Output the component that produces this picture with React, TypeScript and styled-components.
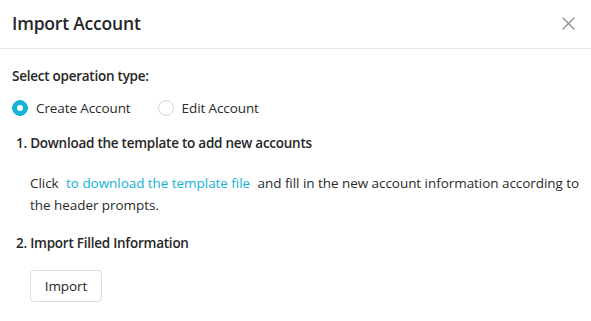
import React, { useState } from "react";
import styled, { createGlobalStyle } from "styled-components";

const Global = createGlobalStyle`
  html, body { margin: 0; padding: 0; background: #ffffff; }
  body { font-family: "Open Sans", "Noto Sans", sans-serif; color: #262626; }
  * { box-sizing: border-box; }
`;

const ACCENT = "#15b2d8";

const Dialog = styled.div`
  width: 591px;
  height: 321px;
  background: #fff;
  display: flex;
  flex-direction: column;
`;

const Header = styled.div`
  height: 49px;
  display: flex;
  align-items: center;
  justify-content: space-between;
  padding: 0 12px 2px 12px;
  border-bottom: 1px solid #e9e9e9;
`;

const Title = styled.h1`
  margin: 0;
  font-size: 17.5px;
  font-weight: 600;
  color: #262626;
  letter-spacing: -0.2px;
`;

const CloseButton = styled.button`
  border: none;
  background: transparent;
  padding: 0;
  width: 16px;
  height: 16px;
  margin-right: 3px;
  display: flex;
  align-items: center;
  justify-content: center;
  cursor: pointer;
`;

const Body = styled.div`
  padding: 17px 8px 0 12px;
  display: flex;
  flex-direction: column;
`;

const Label = styled.div`
  font-size: 13.5px;
  font-weight: 600;
  line-height: 20px;
  letter-spacing: -0.25px;
`;

const RadioGroup = styled.div`
  display: flex;
  align-items: center;
  gap: 27px;
  margin-top: 12px;
  height: 20px;
`;

const RadioOption = styled.label`
  display: flex;
  align-items: center;
  gap: 8px;
  font-size: 13.5px;
  letter-spacing: -0.1px;
  cursor: pointer;
  color: #2a2a2a;
`;

const RadioDot = styled.span<{ $checked: boolean }>`
  width: 16px;
  height: 16px;
  border-radius: 50%;
  display: inline-flex;
  align-items: center;
  justify-content: center;
  background: ${(p) => (p.$checked ? ACCENT : "#fff")};
  border: 1px solid ${(p) => (p.$checked ? ACCENT : "#d9d9d9")};
  &::after {
    content: "";
    width: 6px;
    height: 6px;
    border-radius: 50%;
    background: #fff;
    display: ${(p) => (p.$checked ? "block" : "none")};
  }
`;

const StepTitle = styled.div<{ $top: number }>`
  margin-top: ${(p) => p.$top}px;
  padding-left: 4px;
  font-size: 13.5px;
  font-weight: 600;
  line-height: 20px;
  letter-spacing: -0.25px;
`;

const Paragraph = styled.p`
  margin: 19px 0 0 0;
  padding-left: 18px;
  font-size: 13.5px;
  line-height: 22px;
  letter-spacing: -0.05px;
  color: #2a2a2a;
`;

const Link = styled.a`
  color: ${ACCENT};
  text-decoration: none;
  margin: 0 4px;
  cursor: pointer;
`;

const ButtonRow = styled.div`
  margin-top: 17px;
  padding-left: 18px;
`;

const Button = styled.button`
  width: 72px;
  height: 32px;
  border: 1px solid #dcdcdc;
  border-radius: 4px;
  background: #fff;
  font-family: inherit;
  font-size: 13.5px;
  letter-spacing: -0.1px;
  color: #262626;
  cursor: pointer;
`;

export default function App() {
  const [mode, setMode] = useState<"create" | "edit">("create");
  return (
    <>
      <Global />
      <Dialog>
        <Header>
          <Title>Import Account</Title>
          <CloseButton aria-label="close">
            <svg width="13" height="13" viewBox="0 0 13 13">
              <path d="M1 1 L12 12 M12 1 L1 12" stroke="#8c8c8c" strokeWidth="1.3" strokeLinecap="round" />
            </svg>
          </CloseButton>
        </Header>
        <Body>
          <Label>Select operation type:</Label>
          <RadioGroup>
            <RadioOption onClick={() => setMode("create")}>
              <RadioDot $checked={mode === "create"} />
              Create Account
            </RadioOption>
            <RadioOption onClick={() => setMode("edit")}>
              <RadioDot $checked={mode === "edit"} />
              Edit Account
            </RadioOption>
          </RadioGroup>
          <StepTitle $top={15}>1. Download the template to add new accounts</StepTitle>
          <Paragraph>
            Click <Link>to download the template file</Link> and fill in the new account information according to the
            header prompts.
          </Paragraph>
          <StepTitle $top={17}>2. Import Filled Information</StepTitle>
          <ButtonRow>
            <Button>Import</Button>
          </ButtonRow>
        </Body>
      </Dialog>
    </>
  );
}
